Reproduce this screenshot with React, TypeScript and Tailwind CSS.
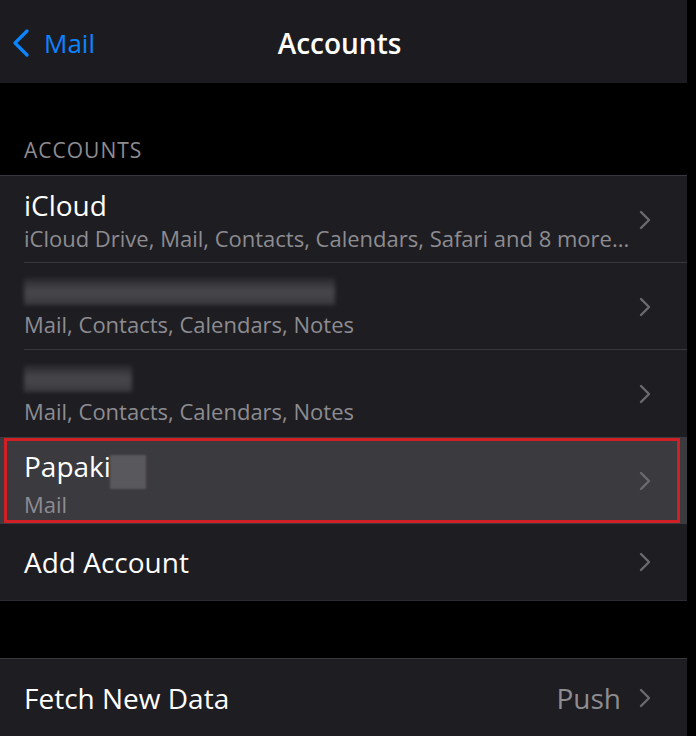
import React from 'react';

const Chevron: React.FC<{ className?: string }> = ({ className }) => (
  <svg width="12" height="20" viewBox="0 0 12 20" fill="none" className={className}>
    <path d="M2 2l8 8-8 8" stroke="currentColor" strokeWidth={2.4} strokeLinecap="round" strokeLinejoin="round" />
  </svg>
);

const Row: React.FC<{
  title?: React.ReactNode;
  subtitle?: string;
  highlighted?: boolean;
  last?: boolean;
  height?: string;
  value?: string;
}> = ({ title, subtitle, highlighted, last, height = 'h-[87px]', value }) => (
  <div className={`relative ${height} ${highlighted ? 'bg-[#3b3a3f]' : 'bg-[#1e1d21]'}`}>
    <div className="flex h-full items-center pl-6 pr-[36px]">
      <div className="flex min-w-0 flex-1 flex-col">
        {title}
        {subtitle && <div className="whitespace-nowrap text-[22px] leading-[30px] text-[#8d8c91]">{subtitle}</div>}
      </div>
      {value && <span className="mr-[18px] text-[28px] text-[#8d8c91]">{value}</span>}
      <Chevron className="shrink-0 text-[#6b6a6f]" />
    </div>
    {!last && <div className="absolute bottom-0 left-6 right-0 h-px bg-[#38373c]" />}
  </div>
);

const Blur: React.FC<{ w: string }> = ({ w }) => (
  <div className={`my-[4px] h-[27px] ${w} bg-gradient-to-b from-[#2a292d] via-[#48474c] to-[#3a393e] blur-[2px]`} />
);

export default function App() {
  return (
    <div className="flex h-[736px] w-[696px] overflow-hidden bg-black" style={{ fontFamily: '"Open Sans", "Liberation Sans", sans-serif' }}>
      <div className="flex w-[687px] flex-col">
        <div className="relative flex h-[83px] items-center justify-center bg-[#1c1b1f] pt-[4px]">
          <div className="absolute inset-y-0 left-3 flex items-center gap-[14px] pt-[4px] text-[#0a84ff]">
            <svg width="18" height="28" viewBox="0 0 18 28" fill="none">
              <path d="M15 2L3 14l12 12" stroke="currentColor" strokeWidth={3.2} strokeLinecap="round" strokeLinejoin="round" />
            </svg>
            <span className="text-[26px]">Mail</span>
          </div>
          <span className="ml-[-8px] text-[28px] font-semibold text-white">Accounts</span>
        </div>

        <div className="flex h-[93px] items-end pb-[9px] pl-6 text-[21px] tracking-[1px] text-[#8d8c91]">ACCOUNTS</div>

        <div className="border-t border-[#38373c]">
          <Row
            title={<div className="text-[28px] leading-[36px] text-white">iCloud</div>}
            subtitle="iCloud Drive, Mail, Contacts, Calendars, Safari and 8 more..."
          />
          <Row title={<Blur w="w-[311px]" />} subtitle="Mail, Contacts, Calendars, Notes" />
          <Row title={<Blur w="w-[108px]" />} subtitle="Mail, Contacts, Calendars, Notes" last />
          <div className="relative">
            <Row
              highlighted
              last
              title={
                <div className="flex items-center text-[28px] leading-[36px] text-white">
                  Papaki
                  <span className="ml-[-1px] mt-[12px] h-[34px] w-[36px] bg-[#59585d] blur-[1px]" />
                </div>
              }
              subtitle="Mail"
            />
            <div className="pointer-events-none absolute inset-y-[1px] left-1 right-[7px] border-[3px] border-[#d01f25]" />
          </div>
          <Row
            height="h-[76px]"
            last
            title={<div className="text-[28px] text-white">Add Account</div>}
          />
        </div>
        <div className="h-[58px] border-t border-[#2c2b30] bg-black" />
        <div className="border-t border-[#38373c]">
          <Row
            height="h-[77px]"
            last
            value="Push"
            title={<div className="text-[28px] text-white">Fetch New Data</div>}
          />
        </div>
      </div>
    </div>
  );
}
